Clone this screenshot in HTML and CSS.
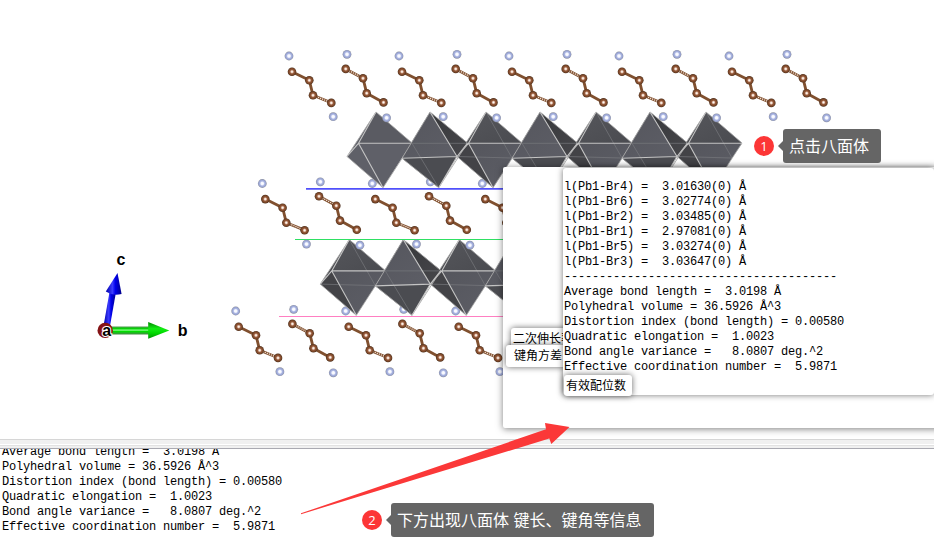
FILE: index.html
```html
<!DOCTYPE html>
<html lang="zh-CN">
<head>
<meta charset="utf-8">
<title>八面体</title>
<link rel="stylesheet" href="styles.css">
</head>
<body>
<main class="app">
  <section class="viewer">
    <svg class="scene" width="934" height="439" viewBox="0 0 934 439">
      <defs>
        <radialGradient id="carbonFill">
          <stop offset="0" stop-color="#fff"/><stop offset=".2" stop-color="#f3dccd"/>
          <stop offset=".48" stop-color="#96593a"/><stop offset=".8" stop-color="#784526"/><stop offset="1" stop-color="#4a2f1e"/>
        </radialGradient>
        <radialGradient id="nitrogenFill">
          <stop offset="0" stop-color="#fff"/><stop offset=".3" stop-color="#f4f6ff"/>
          <stop offset=".55" stop-color="#abb6e2"/><stop offset=".82" stop-color="#96a1cf"/><stop offset="1" stop-color="#8b8f9b"/>
        </radialGradient>
        <linearGradient id="faceFront" x1="0" y1="0" x2="1" y2="1">
          <stop offset="0" stop-color="#55565d"/><stop offset="1" stop-color="#5d5e66"/>
        </linearGradient>
        <linearGradient id="faceTop" x1="0" y1="0" x2="1" y2="1">
          <stop offset="0" stop-color="#55565b"/><stop offset="1" stop-color="#4a4b50"/>
        </linearGradient>
        <linearGradient id="faceSide" x1="0" y1="0" x2="1" y2="1">
          <stop offset="0" stop-color="#37383b"/><stop offset="1" stop-color="#47474b"/>
        </linearGradient>
        <linearGradient id="shaftGreen" x1="0" y1="0" x2="0" y2="1">
          <stop offset="0" stop-color="#4f9a4f"/><stop offset=".28" stop-color="#00d500"/><stop offset=".45" stop-color="#8cff8c"/>
          <stop offset=".62" stop-color="#00dd00"/><stop offset="1" stop-color="#478647"/>
        </linearGradient>
        <linearGradient id="headGreen" x1="0" y1="0" x2="0" y2="1">
          <stop offset="0" stop-color="#008600"/><stop offset=".4" stop-color="#12ed12"/><stop offset=".65" stop-color="#00d900"/><stop offset="1" stop-color="#009000"/>
        </linearGradient>
        <linearGradient id="axisBlue">
          <stop offset="0" stop-color="#0000a8"/><stop offset=".42" stop-color="#3c3cff"/><stop offset=".6" stop-color="#0000ec"/><stop offset="1" stop-color="#000087"/>
        </linearGradient>
        <circle id="carbon" r="4.3" fill="url(#carbonFill)"/>
        <circle id="nitrogen" r="4.4" fill="url(#nitrogenFill)"/>
        <g id="chainA">
          <path class="bond" d="M292 71.7 309.3 80.3 313 95.3"/>
          <path class="bond" d="M313 95.3 331.3 102.7"/><path class="stripe" d="M316 96.4 328 101.4"/>
          <use href="#carbon" x="292" y="71.7"/><use href="#carbon" x="309.3" y="80.3"/>
          <use href="#carbon" x="313" y="95.3"/><use href="#carbon" x="331.3" y="102.9"/>
        </g>
        <g id="chainB">
          <path class="bond" d="M345.7 68.9 363 78.3 366.7 93.2 383.5 102.4"/>
          <path class="stripe" d="M349 70.6 359.5 76.3"/>
          <use href="#carbon" x="345.7" y="68.9"/><use href="#carbon" x="363" y="78.3"/>
          <use href="#carbon" x="366.7" y="93.2"/><use href="#carbon" x="383.5" y="102.4"/>
        </g>
        <g id="pair">
          <use href="#chainA"/><use href="#chainB"/>
        </g>
        <g id="upperN"><use href="#nitrogen" x="289" y="56"/><use href="#nitrogen" x="347" y="54.3"/></g>
        <g id="lowerN"><use href="#nitrogen" x="333.2" y="116.7"/><use href="#nitrogen" x="386.6" y="117.8"/></g>
        <g id="octaA">
          <path fill="#4b4c51" d="M376 112 347 156.5 383 187.7 402 158 412 143Z"/>
          <path fill="url(#faceTop)" d="M376 112 358.5 143.3H412Z"/>
          <path fill="url(#faceFront)" d="M358.5 143.3H412L402 158 383 187.7Z"/>
          <path fill="#434347" d="M347 156.5 358.5 143.3 383 187.7Z"/>
          <path class="faint" d="M376 112 402 158M347 156.5 402 158"/>
          <path class="rim" d="M376 112 347 156.5 383 187.7 412 143Z"/>
          <path class="edge" d="M376 112 358.5 143.3 383 187.7M347 156.5 358.5 143.3H412"/>
        </g>
        <g id="octaFirst">
          <path fill="#5f6068" d="M376 112 347 156.5 383 187.7 402 158 412 143Z"/>
          <path fill="#5a5b62" d="M376 112 358.5 143.3H412Z"/>
          <path class="rim" d="M376 112 347 156.5 383 187.7 412 143Z"/>
          <path class="edge" d="M376 112 358.5 143.3 383 187.7M347 156.5 358.5 143.3H412"/>
        </g>
        <g id="octaB">
          <path fill="#3f4043" d="M430 112 402 158.3 438.7 187.7 457 156.5 467.5 143Z"/>
          <path fill="url(#faceSide)" d="M430 112 467.5 143 457 156.5Z"/>
          <path fill="url(#faceFront)" d="M430 112 402 158.3 457 156.5Z"/>
          <path fill="#4b4c51" d="M402 158.3 457 156.5 438.7 187.7Z"/>
          <path class="faint" d="M412 143.3H467M412 143.3 438.7 187.7"/>
          <path class="rim" d="M430 112 402 158.3 438.7 187.7 467.5 143Z"/>
          <path class="edge" d="M430 112 457 156.5 438.7 187.7M402 158.3 457 156.5 467.5 143"/>
        </g>
      </defs>

      <g>
        <use href="#upperN"/><use href="#upperN" x="110"/><use href="#upperN" x="220"/><use href="#upperN" x="330"/><use href="#upperN" x="440"/>
        <use href="#upperN" x="-26.7" y="127.5"/><use href="#upperN" x="83.3" y="127.5"/><use href="#upperN" x="193.3" y="127.5"/>
        <use href="#upperN" x="-53.3" y="255"/><use href="#upperN" x="56.7" y="255"/><use href="#upperN" x="166.7" y="255"/>
      </g>
      <g>
        <use href="#octaFirst"/><use href="#octaA" x="110"/><use href="#octaA" x="220"/><use href="#octaA" x="330"/>
        <use href="#octaB"/><use href="#octaB" x="110"/><use href="#octaB" x="220"/>
        <use href="#octaA" x="-26.7" y="127.6"/><use href="#octaA" x="83.3" y="127.6"/>
        <use href="#octaB" x="-26.7" y="127.6"/><use href="#octaB" x="83.3" y="127.6"/>
      </g>
      <path stroke="#5050fb" stroke-width="1.8" d="M306 188.8H510"/>
      <path stroke="#2fe063" stroke-width="1.1" d="M295 239.5H510"/>
      <path stroke="#ff7fc2" stroke-width="1.1" d="M279 316.5H510"/>
      <g>
        <use href="#pair"/><use href="#pair" x="110"/><use href="#pair" x="220"/><use href="#pair" x="330"/><use href="#pair" x="440"/>
        <use href="#pair" x="-26.7" y="127.4"/><use href="#pair" x="83.3" y="127.4"/><use href="#pair" x="193.3" y="127.4"/>
        <use href="#pair" x="-53.3" y="255"/><use href="#pair" x="56.7" y="255"/><use href="#pair" x="166.7" y="255"/>
      </g>
      <g>
        <use href="#lowerN"/><use href="#lowerN" x="110"/><use href="#lowerN" x="220"/><use href="#lowerN" x="330"/><use href="#lowerN" x="440"/>
        <use href="#lowerN" x="-26.7" y="127.4"/><use href="#lowerN" x="83.3" y="127.4"/><use href="#lowerN" x="193.3" y="127.4"/>
        <use href="#lowerN" x="-53.3" y="255"/><use href="#lowerN" x="56.7" y="255"/><use href="#lowerN" x="166.7" y="255"/>
      </g>

      <g class="axes">
        <path fill="url(#axisBlue)" d="M103.5 326 109.5 292H116L109.8 327Z"/>
        <path fill="url(#axisBlue)" d="M105.8 291.5 117.5 273 121.6 294Q113 296.5 105.8 291.5Z"/>
        <path fill="url(#shaftGreen)" d="M111 326.5H149V334.5H111Z"/>
        <path fill="url(#headGreen)" d="M148.2 322 169.3 330.5 148.2 338.8Z"/>
        <circle cx="105.2" cy="330.4" r="7.7" fill="#841316"/><circle cx="105.5" cy="329.8" r="4" fill="#b82c2c"/>
        <text class="halo" x="102.3" y="335.5">a</text>
        <text x="116.6" y="265">c</text>
        <text x="177.8" y="335.5">b</text>
      </g>
    </svg>

    <div class="popup">
      <span class="tag tag-quad">二次伸长率</span>
      <span class="tag tag-angle">键角方差</span>
      <div class="detail">
<pre class="mono">l(Pb1-Br4) =  3.01630(0) Å
l(Pb1-Br6) =  3.02774(0) Å
l(Pb1-Br2) =  3.03485(0) Å
l(Pb1-Br1) =  2.97081(0) Å
l(Pb1-Br5) =  3.03274(0) Å
l(Pb1-Br3) =  3.03647(0) Å
---------------------------------------
Average bond length =  3.0198 Å
Polyhedral volume = 36.5926 Å^3
Distortion index (bond length) = 0.00580
Quadratic elongation =  1.0023
Bond angle variance =   8.0807 deg.^2
Effective coordination number =  5.9871</pre>
      </div>
      <span class="tag tag-coord">有效配位数</span>
    </div>
  </section>

  <div class="splitter"></div>

  <section class="console">
<pre class="mono">Average bond length =  3.0198 Å
Polyhedral volume = 36.5926 Å^3
Distortion index (bond length) = 0.00580
Quadratic elongation =  1.0023
Bond angle variance =   8.0807 deg.^2
Effective coordination number =  5.9871</pre>
  </section>

  <svg class="pointer" width="270" height="94" viewBox="300 422 270 94">
    <path fill="#fb3838" d="M301 513.3 546 429.3 545 423 569.5 427 551.3 444 549.3 438.6 301 514.2Z"/>
  </svg>

  <div class="callout callout-one"><span class="badge">1</span><span class="bubble">点击八面体</span></div>
  <div class="callout callout-two"><span class="badge">2</span><span class="bubble">下方出现八面体 键长、键角等信息</span></div>
</main>
</body>
</html>
```
FILE: styles.css
```css
* { box-sizing: border-box; }

body {
  margin: 0;
  background: #fff;
  color: #000;
  font-family: "Liberation Sans", "Noto Sans CJK SC", sans-serif;
}

.app {
  position: relative;
  display: flex;
  flex-direction: column;
  width: 934px;
  height: 541px;
  overflow: hidden;
}

.viewer {
  position: relative;
  flex: 0 0 439px;
  overflow: hidden;
}

.scene { display: block; }

.bond { fill: none; stroke: #80502f; stroke-width: 2.8; }
.stripe { fill: none; stroke: #f3e3d8; stroke-width: 1.3; stroke-dasharray: 1.2 1; }
.rim { fill: none; stroke: #a9a9a9; stroke-width: .9; }
.edge { fill: none; stroke: #c4c4c4; stroke-width: 1.1; }
.faint { fill: none; stroke: #77787d; stroke-width: .7; }

.axes text { font: bold 16px "Liberation Sans", sans-serif; }
.axes .halo { stroke: #fff; stroke-width: 2px; paint-order: stroke; }

.popup {
  position: absolute;
  left: 503px;
  top: 167px;
  width: 440px;
  height: 261px;
  padding: 1px 0 0 60px;
  background: #fff;
  border-radius: 2px;
  box-shadow: 0 1px 7px rgba(0, 0, 0, .5);
}

.detail {
  position: relative;
  width: 371px;
  height: 227px;
  padding: 12px 0 0 1px;
  background: #fff;
  border-radius: 3px;
  box-shadow: 0 0 6px rgba(0, 0, 0, .55);
}

.mono {
  margin: 0;
  font: 12px/15px "Liberation Mono", monospace;
  letter-spacing: -.2px;
}

.tag {
  position: absolute;
  height: 22px;
  padding: 0 3px;
  background: #fff;
  border-radius: 3px;
  box-shadow: 0 0 6px rgba(0, 0, 0, .6);
  font: 12px/20px "Noto Sans CJK SC", sans-serif;
  white-space: nowrap;
}

.tag-quad { left: 8px; top: 161px; padding-left: 2px; }
.tag-angle { left: 3px; top: 178px; width: 65px; padding-left: 8px; }
.tag-coord { left: 61px; top: 208px; width: 68px; height: 21px; padding-left: 2px; }

.splitter {
  flex: 0 0 10px;
  background: linear-gradient(#d6d6d6 0 1px, #f0f0f0 1px 5px, #fff 5px 6px, #e2e2e2 6px 7px, #f0f0f0 7px 9px, #a9a9b1 9px 10px);
}

.console {
  display: flex;
  flex: 1;
  align-items: flex-end;
  min-height: 0;
  padding: 0 0 6px 2px;
  overflow: hidden;
}

.pointer { position: absolute; left: 300px; top: 422px; }

.callout {
  position: absolute;
  display: flex;
  align-items: center;
  gap: 9px;
}

.callout-one { left: 754px; top: 129px; }
.callout-two { left: 362px; top: 503px; }
.callout-two .bubble { word-spacing: 1px; }

.badge {
  width: 20px;
  height: 20px;
  border-radius: 50%;
  background: #fc3636;
  color: #fff;
  font: 13px/20px "Open Sans", sans-serif;
  text-align: center;
}

.bubble {
  position: relative;
  height: 34px;
  padding: 0 12px 0 6px;
  border-radius: 3px;
  background: #656565;
  color: #fff;
  font: 16px/33px "Noto Sans CJK SC", sans-serif;
  white-space: nowrap;
}

.bubble::before {
  content: "";
  position: absolute;
  left: -5px;
  top: 12px;
  border: solid transparent;
  border-width: 5px 5px 5px 0;
  border-right-color: #656565;
}
```
